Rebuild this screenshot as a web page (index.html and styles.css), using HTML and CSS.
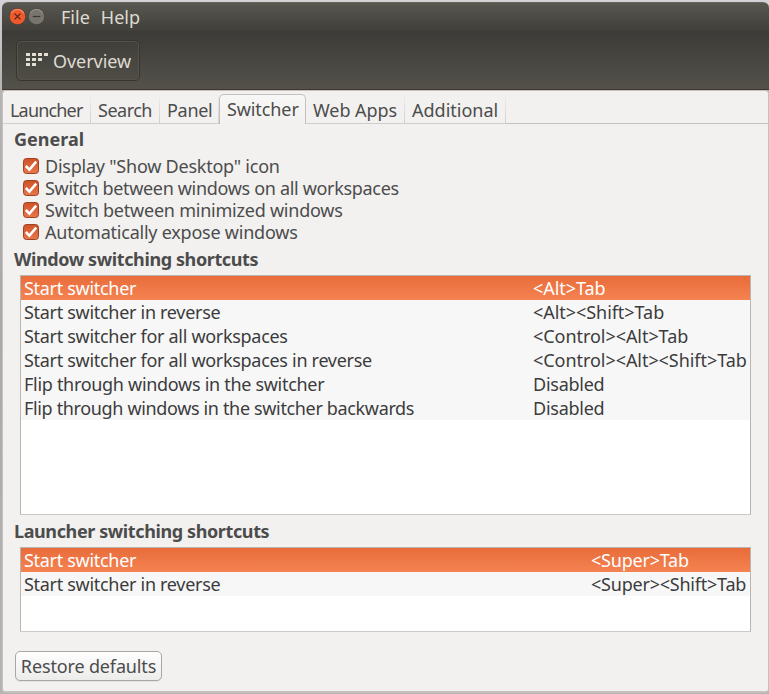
FILE: index.html
```html
<!DOCTYPE html>
<html lang="en">
<head>
<meta charset="utf-8">
<title>Unity settings</title>
<link rel="stylesheet" href="styles.css">
</head>
<body>
<svg class="defs" width="0" height="0" aria-hidden="true">
  <defs>
    <linearGradient id="boxfill" x1="0" y1="0" x2="0" y2="1">
      <stop offset="0" stop-color="#cf5226"/><stop offset="1" stop-color="#e7774c"/>
    </linearGradient>
    <symbol id="checkbox" viewBox="0 0 16 16">
      <rect x=".5" y=".5" width="15" height="15" rx="3" fill="url(#boxfill)" stroke="#a04122"/>
      <path d="M2.8 8L6.4 11.6L13.2 3.6" fill="none" stroke="#fff" stroke-width="2.5"/>
    </symbol>
  </defs>
</svg>
<div class="window">
  <header class="titlebar">
    <svg class="control" viewBox="0 0 16 16"><circle cx="8" cy="8" r="7.7" fill="#ee5a2c" stroke="#3c3b36" stroke-width=".6"/><path d="M2 5A6.8 6.8 0 0 1 14 5" fill="none" stroke="#fa8e69"/><path d="M5.3 5.3L10.7 10.7M10.7 5.3L5.3 10.7" stroke="#582719" stroke-width="1.3"/></svg>
    <svg class="control" viewBox="0 0 16 16"><circle cx="8" cy="8" r="7.7" fill="#77756d" stroke="#3c3b36" stroke-width=".6"/><path d="M2 5A6.8 6.8 0 0 1 14 5" fill="none" stroke="#929087"/><path d="M4.5 8H11.5" stroke="#393832" stroke-width="1.2"/></svg>
    <nav class="menu"><span>File</span><span>Help</span></nav>
  </header>
  <div class="toolbar">
    <button class="overview">
      <svg width="23" height="14" viewBox="0 0 23 14" fill="#e4dfd3"><path d="M0 0h4v3H0zM6 0h4v3H6zM12 0h4v3h-4zM18 0h4v3h-4zM0 5h4v3H0zM6 5h4v3H6zM12 5h4v3h-4zM0 10h4v3H0zM6 10h4v3H6z"/></svg>
      <span>Overview</span>
    </button>
  </div>
  <main class="notebook">
    <nav class="tabs">
      <span class="tab launcher">Launcher</span>
      <span class="tab search">Search</span>
      <span class="tab panel">Panel</span>
      <span class="tab switcher">Switcher</span>
      <span class="tab webapps">Web Apps</span>
      <span class="tab additional">Additional</span>
      <span class="rest"></span>
    </nav>
    <section class="page">
      <h2 class="short">General</h2>
      <div class="checks">
        <label><svg><use href="#checkbox"/></svg>Display "Show Desktop" icon</label>
        <label class="long"><svg><use href="#checkbox"/></svg>Switch between windows on all workspaces</label>
        <label><svg><use href="#checkbox"/></svg>Switch between minimized windows</label>
        <label><svg><use href="#checkbox"/></svg>Automatically expose windows</label>
      </div>
      <h2>Window switching shortcuts</h2>
      <div class="list windows">
        <div class="row selected"><span>Start switcher</span><kbd>&lt;Alt&gt;Tab</kbd></div>
        <div class="row"><span>Start switcher in reverse</span><kbd>&lt;Alt&gt;&lt;Shift&gt;Tab</kbd></div>
        <div class="row"><span>Start switcher for all workspaces</span><kbd>&lt;Control&gt;&lt;Alt&gt;Tab</kbd></div>
        <div class="row"><span>Start switcher for all workspaces in reverse</span><kbd>&lt;Control&gt;&lt;Alt&gt;&lt;Shift&gt;Tab</kbd></div>
        <div class="row"><span>Flip through windows in the switcher</span><kbd class="off">Disabled</kbd></div>
        <div class="row"><span class="long">Flip through windows in the switcher backwards</span><kbd class="off">Disabled</kbd></div>
      </div>
      <h2>Launcher switching shortcuts</h2>
      <div class="list launchers">
        <div class="row selected"><span>Start switcher</span><kbd>&lt;Super&gt;Tab</kbd></div>
        <div class="row"><span>Start switcher in reverse</span><kbd>&lt;Super&gt;&lt;Shift&gt;Tab</kbd></div>
      </div>
      <button class="restore">Restore defaults</button>
    </section>
  </main>
</div>
</body>
</html>
```
FILE: styles.css
```css
* { box-sizing: border-box; }

body {
  margin: 0;
  width: 769px;
  height: 694px;
  padding: 2px 0 0 2px;
  overflow: hidden;
  background: linear-gradient(#d3d3d8 0, #b5b5b5 80px, #a9a9a9 300px, #b4b4b4 100%);
  font-family: "Noto Sans", sans-serif;
  font-size: 18px;
  letter-spacing: -0.3px;
  color: #4c4c4c;
}

.defs { position: absolute; }

button {
  font: inherit;
  letter-spacing: inherit;
  padding: 0;
}

.window {
  height: 692px;
  display: flex;
  flex-direction: column;
}

.titlebar {
  height: 29px;
  display: flex;
  align-items: center;
  gap: 2px;
  padding: 0 0 1px 7px;
  border-top: 1px solid #66645a;
  border-radius: 6px 6px 0 0;
  background: linear-gradient(#595750, #403f3a);
}

.control { width: 17px; height: 17px; }

.menu {
  display: flex;
  gap: 11px;
  margin-left: 14px;
  color: #dfdbd2;
  letter-spacing: 0;
}

.toolbar {
  height: 59px;
  padding: 9px 14px;
  background: linear-gradient(#3c3b37, #53514a);
  border-bottom: 1px solid #3f3634;
}

.overview {
  width: 124px;
  height: 41px;
  display: flex;
  align-items: center;
  gap: 4px;
  padding-left: 9px;
  border: 1px solid #36352f;
  border-radius: 5px;
  background: linear-gradient(#413f3a, #4f4d46);
  box-shadow: inset 0 0 0 1px #55534c;
  color: #dfdbd2;
  letter-spacing: -0.05px;
}

.overview svg { margin-bottom: 2px; }

.notebook {
  height: 603px;
  border: solid #c5c2bd;
  border-width: 1px 1px 2px;
  border-radius: 4px;
  background: #f2f1f0;
}

.tabs {
  height: 33px;
  padding-top: 3px;
  display: flex;
}

.tab {
  height: 30px;
  padding: 4px 0 0 7px;
  line-height: 25px;
  border-right: 1px solid;
  border-bottom: 1px solid #c4c0bc;
  border-image: linear-gradient(#f2f1f0, #d0cdc9) 1;
}

.launcher { width: 88px; letter-spacing: -0.82px; }
.search { width: 69px; letter-spacing: -0.5px; }
.panel { width: 59px; letter-spacing: -0.3px; border-right-width: 0; }
.switcher {
  width: 87px;
  padding-top: 2px;
  border: 1px solid #c4c0bc;
  border-bottom: 0;
  border-radius: 5px 5px 0 0;
  border-image: none;
  background: linear-gradient(#f7f7f6, #f2f1f0);
  letter-spacing: -0.1px;
}
.webapps { width: 99px; letter-spacing: -0.05px; }
.additional { width: 101px; letter-spacing: 0; }
.launcher, .search, .panel, .webapps, .additional { border-image-width: 0 1px 1px 0; }
.rest { flex: 1; border-bottom: 1px solid #c4c0bc; }

.page {
  display: flex;
  flex-direction: column;
  padding-left: 11px;
}

h2 {
  margin: 0;
  height: 31px;
  line-height: 31px;
  font-size: 18px;
  font-weight: 700;
  letter-spacing: -0.39px;
}

.short { letter-spacing: 0; }

.checks {
  padding-left: 9px;
  margin-bottom: 1px;
  letter-spacing: -0.23px;
}

.checks label {
  display: flex;
  align-items: center;
  gap: 6px;
  height: 22px;
}

.checks .long { letter-spacing: -0.32px; }

.checks svg { width: 16px; height: 16px; }

.list {
  width: 731px;
  margin-left: 6px;
  border: 1px solid #b9b5af;
  border-bottom-color: #ccc9c6;
  background: #fff;
  color: #3c3c3c;
}

.windows { height: 240px; margin-bottom: 1px; }
.launchers { height: 85px; margin-bottom: 19px; }

.row {
  display: grid;
  grid-template-columns: 509px 1fr;
  align-items: center;
  height: 24px;
  line-height: 24px;
  padding-left: 3px;
  background: #f7f7f7;
}

.row .long { letter-spacing: -0.35px; }

.launchers .row { grid-template-columns: 567px 1fr; }

.list .selected {
  background: linear-gradient(#e86c3a, #f58352);
  color: #fff;
}

kbd {
  font: inherit;
  letter-spacing: -0.05px;
}

.launchers kbd { letter-spacing: -0.22px; }
.off { letter-spacing: -0.25px; }

.restore {
  width: 147px;
  height: 30px;
  margin-left: 1px;
  border: 1px solid #aaa7a3;
  border-radius: 5px;
  background: linear-gradient(#fefefe, #ececeb);
  box-shadow: 0 1px 0 #e4e2e0;
  color: #4c4c4c;
  letter-spacing: -0.15px;
}
```
